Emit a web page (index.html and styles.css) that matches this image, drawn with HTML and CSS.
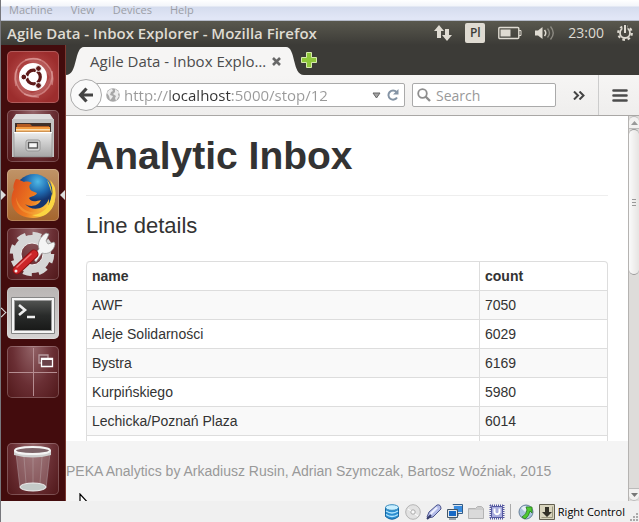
FILE: index.html
```html
<!DOCTYPE html>
<html lang="en">
<head>
<meta charset="utf-8">
<title>Agile Data - Inbox Explorer</title>
<link rel="stylesheet" href="styles.css">
</head>
<body>
<div class="window">
  <nav class="host-menu">
    <button>Machine</button><button>View</button><button>Devices</button><button>Help</button>
  </nav>

  <header class="panel">
    <span class="panel-title">Agile Data - Inbox Explorer - Mozilla Firefox</span>
    <div class="indicators">
      <svg width="18" height="18" viewBox="0 0 18 18" fill="#dfdbd2"><path d="M5 1 0 7h3v7h4V7h3zM13 17l-5-6h3V5h4v6h3z"/></svg>
      <span class="layout">Pl</span>
      <svg width="24" height="14" viewBox="0 0 24 14"><rect x=".8" y="1.5" width="20" height="11" rx="1" fill="none" stroke="#dfdbd2" stroke-width="1.4"/><path fill="#dfdbd2" d="M2.500 3.500h10v7h-10z"/><path fill="none" stroke="#dfdbd2" d="M21 4.500h2v5h-2"/></svg>
      <svg width="20" height="16" viewBox="0 0 20 16" fill="none"><path fill="#dfdbd2" d="M0 5.500h3L7.500 2v12L3 10.500H0z"/><path stroke="#dfdbd2" stroke-width="1.500" d="M9.500 5q2.500 3 0 6"/><path stroke="#8c8a82" stroke-width="1.400" d="M12.500 3.500q4 4.500 0 9M15.500 1.500q5.500 6.500 0 13"/></svg>
      <time>23:00</time>
      <svg width="16" height="18" viewBox="0 0 16 18"><circle cx="8" cy="9" r="5" fill="none" stroke="#dfdbd2" stroke-width="1.800"/><circle cx="8" cy="9" r="6.800" fill="none" stroke="#dfdbd2" stroke-width="2.200" stroke-dasharray="2.600 2.740"/><path stroke="#4b4a43" stroke-width="5" d="M8 0v8"/><path stroke="#dfdbd2" stroke-width="2" d="M8 1v8"/></svg>
    </div>
  </header>

  <div class="desktop">
    <aside class="launcher">
      <button class="tile ubuntu" aria-label="Dash">
        <svg viewBox="0 0 52 52" fill="none"><g stroke="#e4a3a0" stroke-opacity=".55" stroke-width="1.500"><path d="M9 35C4 15 18 4 34 9"/><path d="M18 9c18-6 31 9 27 25"/><path d="M45 20c2 19-13 29-28 23"/><path d="M32 46C13 47 5 32 10 18"/></g><path fill="#fff" fill-opacity=".13" d="M18 9c18-6 31 9 27 25-2-14-12-20-27-25zM45 20c2 19-13 29-28 23 15 0 23-8 28-23zM32 46C13 47 5 32 10 18c1 15 8 22 22 28z"/><circle cx="26" cy="26" r="14" fill="#fff"/><circle cx="26.500" cy="26" r="6.800" stroke="#5d1918" stroke-width="3.200"/><path stroke="#fff" stroke-width="1.400" d="M26 26H15M26 26l6 10M26 26l6-10"/><circle cx="16.800" cy="26" r="2.900" fill="#5d1918" stroke="#fff"/><circle cx="31.500" cy="17.500" r="2.900" fill="#5d1918" stroke="#fff"/><circle cx="31.500" cy="34.500" r="2.900" fill="#5d1918" stroke="#fff"/></svg>
      </button>
      <button class="tile glass" aria-label="Files">
        <svg viewBox="0 0 52 52"><defs><linearGradient id="metal" x2="0" y2="1"><stop stop-color="#ededed"/><stop offset="1" stop-color="#a5a5a5"/></linearGradient></defs><path fill="#ddd" d="M9 4h34l4 6v12H5V10z"/><path fill="#c4c4c4" d="M5 9h42v38H5z"/><path fill="#40302a" d="M8 13h36v10H8z"/><path fill="#b35a22" d="M10 14h13l2 2h17v6H10z"/><path fill="#f19a3e" d="M9 17h34v5H9z"/><path fill="#f8dfb6" d="M9 19h34v1.500H9z"/><path fill="url(#metal)" stroke="#858585" stroke-width=".6" d="M7 22h38v25H7z"/><path fill="#fff" d="M7 22h38v1.300H7z"/><rect x="19" y="30" width="14" height="11" rx="2" fill="#d5d5d5" stroke="#969696"/><rect x="21.500" y="32.500" width="9" height="5.500" fill="#f7f7f7" stroke="#555" stroke-width="1.400"/></svg>
      </button>
      <button class="tile firefox running focused" aria-label="Firefox">
        <svg viewBox="0 0 52 52"><defs><radialGradient id="globe" cx=".6" cy=".2"><stop stop-color="#4fb9e6"/><stop offset=".6" stop-color="#1f6ab0"/><stop offset="1" stop-color="#15356f"/></radialGradient><linearGradient id="fur" x2="1" y2=".4"><stop stop-color="#d9481c"/><stop offset=".6" stop-color="#ee7b20"/><stop offset="1" stop-color="#fbd748"/></linearGradient></defs><circle cx="27" cy="24" r="19" fill="url(#globe)"/><path fill="url(#fur)" d="M9 10c3 0 5 2 8 3 3-1 6 0 8 1-4 2-3 6 0 8l5 2c-1 3-5 3-8 5 2 5 8 3 12 2-3 7-12 7-16 4 6 7 19 7 24-5 0 3 0 5-1 7 7-8 5-16 3-22 5 7 5 14 1 22 3-4 4-12 2-20 5 18-4 32-21 32C8 49 0 35 7 20c-1 0-1-5 2-10z"/><path fill="#fbd541" d="M40 11c6 7 6 17 1 26-4 6-10 9-16 9 14 6 26-9 23-27-1-3-3-6-5-8 3 8 3 11 2 16-1-6-3-11-5-16z"/><path fill="#f6a13a" d="M9 28c3 13 17 21 31 10-9 12-31 9-31-10z" opacity=".55"/></svg>
      </button>
      <button class="tile glass" aria-label="System Settings">
        <svg viewBox="0 0 52 52"><g fill="none" stroke="#d6d6d6"><circle cx="25" cy="26" r="15" stroke-width="8"/><circle cx="25" cy="26" r="20" stroke-width="4.500" stroke-dasharray="8.700 7"/></g><circle cx="25" cy="26" r="11" fill="none" stroke="#f0f0f0"/><path fill="#f4f4f4" stroke="#929292" stroke-width=".7" d="m25 29 7-8c-2-6 1-12 7-16l3 1-3 7 2 3 6-2 1 2c-1 7-7 11-13 9l-6 9z"/><path stroke="#8d1012" stroke-width="9" stroke-linecap="round" d="M10 42 27 26"/><path stroke="#cc2528" stroke-width="7" stroke-linecap="round" d="M10 42 27 26"/><path stroke="#ef7777" stroke-width="1.500" stroke-linecap="round" d="M10 39 24 26"/><circle cx="9" cy="43" r="1.500" fill="#eee"/></svg>
      </button>
      <button class="tile terminal running hollow" aria-label="Terminal">
        <svg viewBox="0 0 52 52" fill="none"><defs><linearGradient id="screen" x2="0" y2="1"><stop stop-color="#505250"/><stop offset=".5" stop-color="#292b2a"/><stop offset="1" stop-color="#191a19"/></linearGradient></defs><path fill="#f5f5f5" stroke="#858585" d="M4.500 10.500h43v36h-43z"/><path fill="#999" d="M7 13h38v31H7z"/><path fill="url(#screen)" d="M8 14h36v29H8z"/><path stroke="#eee" stroke-width="2.600" d="m12 18 6 5-6 5M20 30h8"/></svg>
      </button>
      <button class="tile glass" aria-label="Workspace Switcher">
        <svg viewBox="0 0 52 52" fill="none"><path stroke="#b58d91" d="M26.500 2v48M2 26.500h48"/><path fill="#744850" stroke="#b99ca0" stroke-width="1.300" d="M32 9h9v8h-9z"/><path fill="#6a4148" stroke="#fff" stroke-width="1.300" d="M34.500 12.500h11v8h-11z"/><path stroke="#fff" d="M34 13.500h12"/></svg>
      </button>
      <button class="tile glass trash" aria-label="Trash">
        <svg viewBox="0 0 52 52"><path fill="#c7aeb2" fill-opacity=".35" stroke="#a28489" stroke-width=".7" d="m9 10 4 35q13 5 26 0l4-35z"/><path stroke="#ddd" stroke-opacity=".25" d="m17 14 2 26m7-25v26m9-27-2 26"/><ellipse cx="26" cy="44" rx="13" ry="4" fill="#c4cac8" stroke="#eee"/><path fill="#cfcfcf" d="M7 7v5q19 5 37 0V7z"/><ellipse cx="25.500" cy="7.500" rx="17.500" ry="3.600" fill="#7c6368" stroke="#f4f4f4" stroke-width="2"/></svg>
      </button>
    </aside>

    <div class="browser">
      <div class="tab-strip">
        <div class="tab">
          <svg class="edge" viewBox="0 0 18 28" width="18" height="28"><path fill="#f6f5f4" d="M0 28C12 28 8 0 18 0v28z"/></svg>
          <button class="tab-label">Agile Data - Inbox Explo…</button>
          <button class="tab-close" aria-label="Close tab"><svg width="9" height="9" viewBox="0 0 9 9"><path stroke="#686868" stroke-width="2.600" d="m1 1 7 7m0-7L1 8"/></svg></button>
          <svg class="edge" viewBox="0 0 18 28" width="18" height="28"><path fill="#f6f5f4" d="M18 28C6 28 10 0 0 0v28z"/></svg>
        </div>
        <button class="new-tab" aria-label="New tab"><svg width="16" height="16" viewBox="0 0 16 16"><path fill="#8fc63b" stroke="#d6ecab" d="M5.500.5h5v5h5v5h-5v5h-5v-5h-5v-5h5z"/></svg></button>
      </div>

      <div class="toolbar">
        <button class="back" aria-label="Back"><svg width="16" height="16" viewBox="0 0 16 16" fill="none" stroke="#444" stroke-width="3.200"><path d="M8.500 1.500 2.500 8l6 6.500M3 8h12"/></svg></button>
        <div class="field address">
          <svg width="14" height="14" viewBox="0 0 14 14"><circle cx="7" cy="7" r="6.800" fill="#a7a7a7"/><path fill="#ececec" d="M1 5q2-4 5-4l1 2-2 1-1 3 3 1-1 2-2 2-1-4zM9 1l4 3-1 3 1 1-3 5-1-3 1-2-3-2 2-2z"/></svg>
          <input class="url" aria-label="Address" value="http://localhost:5000/stop/12">
          <button aria-label="History"><svg width="9" height="7" viewBox="0 0 9 7"><path fill="#a5a5a5" stroke="#666" d="M1 1h7L4.500 6z"/></svg></button>
          <button aria-label="Reload"><svg width="12" height="12" viewBox="0 0 12 12"><path fill="none" stroke="#8494a5" stroke-width="2" d="M10 8.500A4.600 4.600 0 1 1 9.500 3"/><path fill="#8494a5" d="M11.500 0v5.500H6z"/></svg></button>
        </div>
        <div class="field search">
          <svg width="14" height="14" viewBox="0 0 14 14" fill="none" stroke="#8e8e8e" stroke-width="1.800"><circle cx="5.500" cy="5.500" r="4.300"/><path stroke-width="2.400" d="m8.500 8.500 4.500 4.500"/></svg>
          <input type="search" aria-label="Search" placeholder="Search">
        </div>
        <button class="more" aria-label="More tools"><svg width="12" height="9" viewBox="0 0 12 9" fill="none" stroke="#444" stroke-width="2"><path d="m1 .5 4 4-4 4M6.500.5l4 4-4 4"/></svg></button>
        <button class="menu" aria-label="Open menu"><svg width="16" height="13" viewBox="0 0 16 13"><path stroke="#4c4c4c" stroke-width="2.600" stroke-linecap="round" d="M1.500 1.500h13m-13 5h13m-13 5h13"/></svg></button>
      </div>

      <div class="viewport">
        <div class="page">
          <main>
            <h1>Analytic Inbox</h1>
            <p class="lead">Line details</p>
            <table>
              <thead><tr><th>name</th><th class="count">count</th></tr></thead>
              <tbody>
                <tr><td>AWF</td><td>7050</td></tr>
                <tr><td>Aleje Solidarności</td><td>6029</td></tr>
                <tr><td>Bystra</td><td>6169</td></tr>
                <tr><td>Kurpińskiego</td><td>5980</td></tr>
                <tr><td>Lechicka/Poznań Plaza</td><td>6014</td></tr>
                <tr><td>&nbsp;</td><td>&nbsp;</td></tr>
              </tbody>
            </table>
          </main>
          <footer>
            PEKA Analytics by Arkadiusz Rusin, Adrian Szymczak, Bartosz Woźniak, 2015
            <svg class="pointer" width="12" height="18" viewBox="0 0 12 18"><path fill="#fff" stroke="#000" stroke-width="1.200" d="M1 1v15l4-4h6z"/></svg>
          </footer>
        </div>
        <div class="scrollbar">
          <span class="step"><svg width="7" height="4" viewBox="0 0 7 4"><path fill="#999" d="M0 4h7L3.500 0z"/></svg></span>
          <span class="thumb"><svg width="4" height="9" viewBox="0 0 4 9"><path stroke="#999" d="M0 1.500h4m-4 3h4m-4 3h4"/></svg></span>
          <span class="step down"><svg width="7" height="4" viewBox="0 0 7 4"><path fill="#777" d="M0 0h7L3.500 4z"/></svg></span>
        </div>
      </div>
    </div>
  </div>

  <div class="status">
    <svg width="16" height="16" viewBox="0 0 16 16"><path fill="#2c8ed0" stroke="#14649f" d="M1.500 3.500v9q6.500 5.500 13 0v-9z"/><ellipse cx="8" cy="3.500" rx="6.500" ry="2.800" fill="#c9efff" stroke="#398cbf"/><path fill="none" stroke="#b6e8ff" stroke-width="1.300" d="M2 7q6 4 12 0M2 10.500q6 4 12 0"/></svg>
    <svg width="16" height="16" viewBox="0 0 16 16"><circle cx="8" cy="8" r="7.300" fill="#e2e2e2" stroke="#b4b4b4"/><circle cx="8" cy="8" r="2.200" fill="#fafafa" stroke="#aaa"/><path stroke="#fff" d="m3 5 3 2m4 3 3 2"/></svg>
    <svg width="16" height="16" viewBox="0 0 16 16"><path fill="#b3bbe8" stroke="#4d568c" d="M11 1q4-1 4 4l-8 8-5 1-1-1 2-5z"/><path fill="#eef0ff" d="m10 3 2 1-7 7-1-2z"/><path stroke="#343b69" stroke-width="2" d="m1 15 4-4"/></svg>
    <svg width="16" height="16" viewBox="0 0 16 16"><path fill="#398ce0" stroke="#dce3ea" d="M6.500 1.500h9v7h-9z"/><path fill="none" stroke="#315b87" d="M6 1V.5h9.500v9H10M11 10v2"/><path fill="#1769c5" stroke="#e7e9eb" d="M1.500 6.500h8v6h-8z"/><path fill="none" stroke="#445667" d="M.5 5.500h10v8H.5zM2 15h7"/></svg>
    <svg width="16" height="16" viewBox="0 0 16 16"><path fill="#ccc" stroke="#b4b4b4" d="M.5 4.500h7l2-2h4l2 2v10H.5z"/><path fill="#dadada" d="M1 6h14v8H1z"/></svg>
    <svg width="16" height="16" viewBox="0 0 16 16"><path stroke="#5559a0" stroke-width="2" stroke-dasharray="1 1" d="M1 1.500h14M1 14.500h14M1.500 1v14M14.500 1v14"/><path fill="#a9adde" stroke="#5559a0" d="M2.500 2.500h11v11h-11z"/><path fill="none" stroke="#fff" stroke-width="2" d="M5.500 4.500v4q2.500 3.500 5 0v-4"/></svg>
    <i class="rule"></i>
    <svg width="16" height="16" viewBox="0 0 16 16"><circle cx="8" cy="8" r="7" fill="#a9c4dc" stroke="#667f98"/><path fill="#e5edf5" d="M3 4q4-4 7 0L7 8z"/><path fill="#4fcb31" stroke="#277c1a" stroke-width=".8" d="M8 3h6v6l-2-2q-1 5-5 8l-3-2q5-3 5-7z"/></svg>
    <svg width="16" height="16" viewBox="0 0 16 16"><path fill="#d8d4bd" stroke="#625f50" d="M.5.5h15v15H.5z"/><path fill="none" stroke="#9c987f" d="M2.500 13.500h11v-11"/><path fill="#333128" d="M6 3h4v5h3l-5 5-5-5h3z"/></svg>
    <span>Right Control</span>
    <svg class="grip" width="9" height="9" viewBox="0 0 9 9"><path fill="#aaa" d="M6 0h2v2H6zM3 3h2v2H3zM6 3h2v2H6zM0 6h2v2H0zM3 6h2v2H3zM6 6h2v2H6z"/></svg>
  </div>
</div>
</body>
</html>
```
FILE: styles.css
```css
* { box-sizing: border-box; }
html, body { height: 100%; margin: 0; }
button { padding: 0; border: 0; background: none; font: inherit; color: inherit; }
svg { display: block; flex: none; }

.window {
  display: flex;
  flex-direction: column;
  height: 100vh;
  overflow: hidden;
  border-left: 1px solid #77777c;
  background: #f0f0f0;
  font-family: "Open Sans", "Noto Sans", sans-serif;
}

.host-menu {
  display: flex;
  align-items: center;
  gap: 18px;
  flex: 0 0 21px;
  padding: 0 8px;
  background: linear-gradient(#fff 0, #f3f5fa 6px, #d5dcee 7px, #e1e6f6 18px, #e1e6f6);
  border-bottom: 1px solid #b6bccb;
  color: #9b9ea6;
  font-size: 11px;
  line-height: 18px;
}

.panel {
  display: flex;
  align-items: center;
  justify-content: space-between;
  flex: 0 0 24px;
  padding: 0 6px;
  background: linear-gradient(#59584e, #3c3b37);
  color: #dfdbd2;
  font-size: 14px;
  line-height: 24px;
  white-space: nowrap;
}
.panel-title { font-size: 15px; font-weight: 600; }
.indicators { display: flex; align-items: center; gap: 13px; }
.layout {
  width: 20px;
  height: 20px;
  border-radius: 2px;
  background: #dfdbd2;
  color: #3c3b37;
  font-size: 12px;
  font-weight: 600;
  line-height: 20px;
  text-align: center;
}

.desktop { display: flex; flex: 1; min-height: 0; }
.launcher {
  display: flex;
  flex-direction: column;
  gap: 7px;
  flex: 0 0 65px;
  padding: 6px;
  background: #430c0d;
  border-right: 1px solid #7c3a32;
}
.tile {
  position: relative;
  flex: none;
  width: 52px;
  height: 52px;
  border-radius: 5px;
  box-shadow: inset 0 0 0 1px rgba(255, 255, 255, .22);
}
.tile svg { width: 52px; height: 52px; }
.ubuntu { background: radial-gradient(circle at 50% 50%, #c35b58, #9c2d2d 75%); }
.glass { background: radial-gradient(ellipse at 50% 0, #946569, #6a2f34 55%, #501719); }
.firefox { background: linear-gradient(#c09468, #a5652d); }
.terminal { background: linear-gradient(#b9b5b4, #d6d4d3); }
.trash { margin-top: auto; }
.running::before, .focused::after {
  content: "";
  position: absolute;
  top: 21px;
  border: 5px solid transparent;
}
.running::before { left: -6px; border-right-width: 0; border-left-color: #ddd; }
.focused::after { right: -6px; border-left-width: 0; border-right-color: #ddd; }
.hollow::before {
  top: 22px;
  left: -9px;
  width: 6px;
  height: 6px;
  border: 1px solid #ddd;
  border-width: 1px 1px 0 0;
  transform: rotate(45deg);
}

.browser { display: flex; flex: 1; flex-direction: column; min-width: 0; }
.tab-strip {
  display: flex;
  align-items: flex-end;
  flex: 0 0 30px;
  background: #3c3b37;
}
.tab { display: flex; width: 238px; height: 28px; }
.tab-label {
  flex: 1;
  padding-left: 6px;
  background: #f6f5f4;
  color: #4c4c4c;
  font-size: 15px;
  text-align: left;
  white-space: nowrap;
}
.tab-close { padding-right: 5px; background: #f6f5f4; }
.new-tab { align-self: center; margin-left: -3px; }

.toolbar {
  display: flex;
  align-items: center;
  flex: 0 0 41px;
  padding: 0 11px 0 4px;
  background: linear-gradient(#f6f5f4, #efeeed);
  border-bottom: 1px solid #a9a7a5;
}
.back {
  z-index: 1;
  display: grid;
  place-items: center;
  flex: none;
  width: 32px;
  height: 32px;
  border: 1px solid #aaa;
  border-radius: 50%;
  background: #fafafa;
}
.field {
  display: flex;
  align-items: center;
  height: 24px;
  border: 1px solid #aaa;
  border-radius: 2px;
  background: #fff;
}
.field input {
  flex: 1;
  width: 0;
  min-width: 0;
  padding: 0;
  border: 0;
  outline: 0;
  background: none;
  font: 14px "Open Sans", "Noto Sans", sans-serif;
}
.address { flex: 1; gap: 4px; min-width: 0; margin-left: -12px; padding: 0 5px 0 15px; }
.address button + button { margin-left: 2px; }
.field .url {
  background: linear-gradient(to right, #999 46px, #333 46px, #333 108px, #999 108px);
  background-clip: text;
  color: transparent;
  font-size: 15px;
}
.search { flex: 0 0 144px; gap: 5px; margin-left: 7px; padding: 0 4px; }
.search input::placeholder { color: #999; opacity: 1; }
.more { margin: 0 13px 0 17px; }
.menu { align-self: stretch; padding-left: 13px; border-left: 1px solid #ccc; }

.viewport { display: flex; flex: 1; min-height: 0; }
.page {
  display: flex;
  flex: 1;
  flex-direction: column;
  min-width: 0;
  background: #fff;
  color: #333;
  font: 14px/20px "Liberation Sans", Arial, sans-serif;
}
main { flex: 1; min-height: 0; padding: 20px 20px 0; overflow: hidden; }
h1 {
  margin: 0 0 15px;
  padding-bottom: 19px;
  border-bottom: 1px solid #eee;
  font-size: 39px;
  line-height: 40px;
}
.lead { margin: 0 0 20px; font-size: 22px; line-height: 30px; }
table {
  width: 100%;
  border: 1px solid #ddd;
  border-left: 0;
  border-radius: 4px;
  border-spacing: 0;
}
th, td { padding: 4px 5px; border-left: 1px solid #ddd; text-align: left; }
th:first-child { border-top-left-radius: 4px; }
td { border-top: 1px solid #ddd; }
.count { width: 128px; }
tbody tr:nth-child(odd) { background: #f9f9f9; }
footer {
  position: relative;
  flex: 0 0 60px;
  overflow: hidden;
  background: #f4f4f4;
  color: #999;
  line-height: 60px;
  white-space: nowrap;
}
.pointer { position: absolute; left: 13px; top: 52px; }

.scrollbar {
  display: flex;
  flex-direction: column;
  flex: 0 0 11px;
  background: #dedcda;
  border-left: 1px solid #b5b3b1;
}
.step, .thumb { display: grid; place-items: center; }
.step { height: 13px; border: 1px solid #bbb; border-width: 1px 0; border-radius: 5px 5px 0 0; background: #f2f1f0; }
.thumb { height: 38%; border: 1px solid #999; border-width: 1px 0; border-radius: 5px; background: linear-gradient(to right, #fafafa, #e6e4e2); }
.down { margin-top: auto; border-radius: 0 0 5px 5px; }

.status {
  display: flex;
  align-items: center;
  justify-content: flex-end;
  gap: 5px;
  flex: 0 0 21px;
  color: #000;
  font-size: 11px;
}
.status span { margin-left: -2px; white-space: nowrap; }
.rule { width: 1px; height: 15px; margin-right: 2px; background: #aaa; }
.grip { align-self: flex-end; }
```
